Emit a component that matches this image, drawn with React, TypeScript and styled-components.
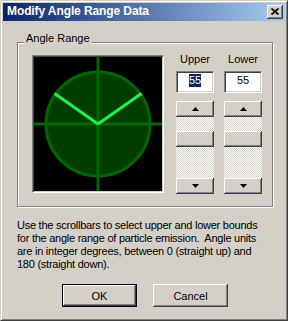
import React from "react";
import styled, { createGlobalStyle } from "styled-components";

const GlobalStyle = createGlobalStyle`
  body {
    margin: 0;
    background: #d4d0c8;
    font-family: "Liberation Sans", Arial, sans-serif;
    font-size: 11px;
    color: #000;
  }
`;

const raised = `
  box-shadow: inset -1px -1px #404040, inset 1px 1px #fff,
    inset -2px -2px #808080, inset 2px 2px #d4d0c8;
`;

const sunken = `
  border: 1px solid;
  border-color: #808080 #fff #fff #808080;
  box-shadow: inset 1px 1px #404040, inset -1px -1px #d4d0c8;
`;

const Window = styled.div`
  width: 288px;
  height: 321px;
  box-sizing: border-box;
  background: #d4d0c8;
  border: 1px solid;
  border-color: #d4d0c8 #404040 #404040 #d4d0c8;
  box-shadow: inset 1px 1px #fff, inset -1px -1px #808080;
  padding: 2px;
  display: flex;
  flex-direction: column;
`;
const TitleBar = styled.div`
  height: 18px;
  display: flex;
  align-items: center;
  justify-content: space-between;
  padding: 0 2px 0 4px;
  background: linear-gradient(to right, #0a246a, #a6caf0);
`;
const TitleText = styled.span`
  color: #fff;
  font-weight: bold;
  font-size: 12px;
  line-height: 14px;
  padding-bottom: 2px;
  letter-spacing: -0.1px;
`;
const CloseButton = styled.div`
  width: 16px;
  height: 14px;
  box-sizing: border-box;
  background: #d4d0c8;
  display: flex;
  align-items: center;
  justify-content: center;
  padding-bottom: 1px;
  ${raised}
`;
const Client = styled.div`
  display: flex;
  flex-direction: column;
  padding: 0 11px 0 14px;
`;
const Group = styled.div`
  position: relative;
  margin-top: 21px;
  width: 256px;
  height: 165px;
  box-sizing: border-box;
  border: 1px solid #808080;
  box-shadow: inset 1px 1px #fff, 1px 1px #fff;
`;
const GroupLabel = styled.span`
  position: absolute;
  top: -11px;
  left: 6px;
  padding: 0 2px;
  line-height: 13px;
  background: #d4d0c8;
`;
const GroupBody = styled.div`
  display: flex;
  gap: 12px;
  padding: 10px 0 0 14px;
`;
const CanvasFrame = styled.div`
  margin-top: 2px;
  width: 132px;
  height: 138px;
  box-sizing: border-box;
  padding: 1px;
  background: #000;
  ${sunken}
  svg {
    display: block;
  }
`;
const Controls = styled.div`
  display: flex;
  gap: 10px;
`;
const Column = styled.div`
  width: 38px;
  display: flex;
  flex-direction: column;
`;
const ColumnLabel = styled.div`
  line-height: 13px;
  text-align: center;
  white-space: nowrap;
`;
const Edit = styled.div`
  margin-top: 5px;
  width: 38px;
  height: 22px;
  box-sizing: border-box;
  background: #fff;
  display: flex;
  justify-content: center;
  align-items: flex-start;
  padding-top: 2px;
  ${sunken}
`;
const EditText = styled.span<{ $selected?: boolean }>`
  line-height: 13px;
  background: ${(p) => (p.$selected ? "#0a246a" : "transparent")};
  color: ${(p) => (p.$selected ? "#fff" : "#000")};
`;
const ScrollBar = styled.div`
  margin-top: 8px;
  height: 93px;
  display: flex;
  flex-direction: column;
`;
const ScrollButton = styled.div`
  height: 16px;
  flex-shrink: 0;
  box-sizing: border-box;
  background: #d4d0c8;
  display: flex;
  align-items: center;
  justify-content: center;
  ${raised}
`;
const Track = styled.div`
  flex: 1;
  display: flex;
  flex-direction: column;
  background-color: #fff;
  background-image: conic-gradient(
    #d4d0c8 25%,
    #fff 0 50%,
    #d4d0c8 0 75%,
    #fff 0
  );
  background-size: 2px 2px;
`;
const Thumb = styled(ScrollButton)<{ $offset: number }>`
  margin-top: ${(p) => p.$offset}px;
`;
const Help = styled.div`
  margin-top: 12px;
  line-height: 13px;
  letter-spacing: -0.25px;
`;
const HelpLine = styled.div`
  white-space: pre;
`;
const ButtonRow = styled.div`
  display: flex;
  gap: 16px;
  margin: 13px 0 0 45px;
`;
const Button = styled.div<{ $default?: boolean }>`
  width: 75px;
  height: 23px;
  box-sizing: border-box;
  display: flex;
  align-items: center;
  justify-content: center;
  background: #d4d0c8;
  border: ${(p) => (p.$default ? "1px solid #000" : "none")};
  ${raised}
`;

const Arrow = ({ down }: { down?: boolean }) => (
  <svg width="7" height="4" viewBox="0 0 7 4">
    <polygon points={down ? "0,0 7,0 3.5,4" : "3.5,0 7,4 0,4"} fill="#000" />
  </svg>
);

const Dial = ({ upper, lower }: { upper: number; lower: number }) => {
  const cx = 64;
  const cy = 67;
  const len = 53;
  const rad = (d: number) => (d * Math.PI) / 180;
  return (
    <svg width="128" height="134" viewBox="0 0 128 134">
      <rect width="128" height="134" fill="#000" />
      <circle cx={cx} cy={cy} r="52" fill="#003e00" stroke="#006800" strokeWidth="3" />
      <line x1={cx} y1="0" x2={cx} y2="134" stroke="#006800" strokeWidth="3" />
      <line x1="0" y1={cy} x2="128" y2={cy} stroke="#006800" strokeWidth="3" />
      <line
        x1={cx}
        y1={cy}
        x2={cx - Math.sin(rad(upper)) * len}
        y2={cy - Math.cos(rad(upper)) * len}
        stroke="#20f050"
        strokeWidth="3"
      />
      <line
        x1={cx}
        y1={cy}
        x2={cx + Math.sin(rad(lower)) * len}
        y2={cy - Math.cos(rad(lower)) * len}
        stroke="#20f050"
        strokeWidth="3"
      />
    </svg>
  );
};

const AngleScroll = ({ value }: { value: number }) => {
  const trackLen = 61 - 16;
  return (
    <ScrollBar>
      <ScrollButton>
        <Arrow />
      </ScrollButton>
      <Track>
        <Thumb $offset={Math.round((value / 180) * trackLen)} />
      </Track>
      <ScrollButton>
        <Arrow down />
      </ScrollButton>
    </ScrollBar>
  );
};

const helpLines = [
  "Use the scrollbars to select upper and lower bounds",
  "for the angle range of particle emission.  Angle units",
  "are in integer degrees, between 0 (straight up) and",
  "180 (straight down).",
];

const App = () => {
  const upper = 55;
  const lower = 55;
  return (
    <>
      <GlobalStyle />
      <Window>
        <TitleBar>
          <TitleText>Modify Angle Range Data</TitleText>
          <CloseButton>
            <svg width="8" height="7" viewBox="0 0 8 7">
              <path d="M0.5 0.5 L7.5 6.5 M7.5 0.5 L0.5 6.5" stroke="#000" strokeWidth="1.8" />
            </svg>
          </CloseButton>
        </TitleBar>
        <Client>
          <Group>
            <GroupLabel>Angle Range</GroupLabel>
            <GroupBody>
              <CanvasFrame>
                <Dial upper={upper} lower={lower} />
              </CanvasFrame>
              <Controls>
                <Column>
                  <ColumnLabel>Upper</ColumnLabel>
                  <Edit>
                    <EditText $selected>{upper}</EditText>
                  </Edit>
                  <AngleScroll value={upper} />
                </Column>
                <Column>
                  <ColumnLabel>Lower</ColumnLabel>
                  <Edit>
                    <EditText>{lower}</EditText>
                  </Edit>
                  <AngleScroll value={lower} />
                </Column>
              </Controls>
            </GroupBody>
          </Group>
          <Help>
            {helpLines.map((l) => (
              <HelpLine key={l}>{l}</HelpLine>
            ))}
          </Help>
          <ButtonRow>
            <Button $default>OK</Button>
            <Button>Cancel</Button>
          </ButtonRow>
        </Client>
      </Window>
    </>
  );
};

export default App;
